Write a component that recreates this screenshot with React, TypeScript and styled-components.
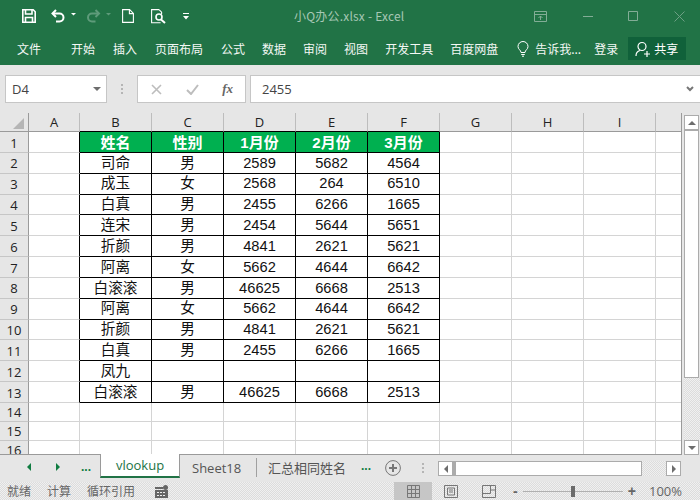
import styled, { createGlobalStyle } from "styled-components";

const Global = createGlobalStyle`
  html, body { margin: 0; padding: 0; background: #e6e6e6; }
  body { font-family: "Noto Sans CJK SC", "Liberation Sans", sans-serif; }
`;

const dither = `repeating-conic-gradient(#dcdcdc 0 25%, #f0f0f0 0 50%) 0 0 / 2px 2px`;

const Window = styled.div`
  width: 700px;
  height: 500px;
  display: flex;
  flex-direction: column;
  overflow: hidden;
`;

const TitleBar = styled.div`
  height: 32px;
  background: #217346;
  position: relative;
  display: flex;
  align-items: center;
  padding-left: 22px;
  flex: none;
`;

const QuickIcon = styled.svg<{ $gap: number }>`
  display: block;
  margin-right: ${p => p.$gap}px;
  flex: none;
`;

const WindowTitle = styled.div`
  position: absolute;
  left: 294px;
  top: 8px;
  font-size: 12px;
  line-height: 16px;
  letter-spacing: 0.2px;
  color: #a6c7b4;
  font-family: "Noto Sans CJK SC", "Open Sans", sans-serif;
`;

const WindowButtons = styled.div`
  margin-left: auto;
  display: flex;
  align-items: center;
  gap: 35.6px;
  padding-right: 15px;
`;

const Ribbon = styled.div`
  height: 33px;
  background: #217346;
  display: flex;
  align-items: center;
  padding: 0 14px 0 17px;
  flex: none;
  color: #fff;
  font-size: 12px;
`;

const RibbonTab = styled.span<{ $gap: number }>`
  margin-right: ${p => p.$gap}px;
  white-space: nowrap;
  line-height: 16px;
  color: #f4f8f5;
`;

const ShareButton = styled.div`
  width: 58px;
  height: 23px;
  margin-left: 10px;
  background: #10613a;
  display: flex;
  align-items: center;
  gap: 3px;
  padding-left: 7px;
  box-sizing: border-box;
`;

const FormulaBar = styled.div`
  height: 48px;
  background: #e6e6e6;
  display: flex;
  align-items: center;
  padding: 0 0 0 5px;
  flex: none;
  box-sizing: border-box;
`;

const Box = styled.div<{ $w?: number }>`
  ${p => (p.$w ? `width: ${p.$w}px; flex: none;` : "flex: 1;")}
  height: 28px;
  box-sizing: border-box;
  background: #fff;
  border: 1px solid #c6c6c6;
  display: flex;
  align-items: center;
  font-family: "Open Sans", "Liberation Sans", sans-serif;
  font-size: 13px;
  color: #444;
`;

const NameBox = styled(Box)`
  padding: 0 5px 0 6px;
  justify-content: space-between;
  margin-right: 14px;
`;

const FnBox = styled(Box)`
  padding: 0 12px 0 13px;
  justify-content: space-between;
  margin-right: 4px;
`;

const InputBox = styled(Box)`
  padding: 0 6px 0 11px;
  justify-content: space-between;
  border-right: none;
`;

const VDots = styled.div<{ $mt?: number; $ml?: number }>`
  width: 2px;
  height: 10px;
  margin: ${p => p.$mt ?? 0}px 14px 0 ${p => p.$ml ?? 0}px;
  background: repeating-linear-gradient(#b5b5b5 0 2px, transparent 2px 4px);
  flex: none;
`;

const FxGlyph = styled.span`
  font-family: "Liberation Serif", serif;
  font-style: italic;
  font-weight: 700;
  font-size: 13px;
  color: #666;
`;

const SheetArea = styled.div`
  height: 342px;
  flex: none;
  display: flex;
  background: #e6e6e6;
`;

const Sheet = styled.div`
  width: 682px;
  flex: none;
  overflow: hidden;
  border-right: 1px solid #9a9a9a;
  border-bottom: 1px solid #9a9a9a;
  box-sizing: border-box;
  display: grid;
  grid-template-columns: 29px 51px repeat(8, 72px) 26px;
  grid-template-rows: 19px 21px repeat(12, 20.83px) repeat(3, 19px);
  background: #fff;
`;

const ColHead = styled.div<{ $black?: boolean; $corner?: boolean }>`
  background: #e6e6e6;
  border-right: 1px solid ${p => (p.$corner ? "#9a9a9a" : "#bdbdbd")};
  border-bottom: 1px solid ${p => (p.$black ? "#000" : "#9a9a9a")};
  box-sizing: border-box;
  font-family: "Open Sans", "Liberation Sans", sans-serif;
  font-size: 13px;
  color: #222;
  display: flex;
  align-items: center;
  justify-content: center;
  position: relative;
`;

const RowHead = styled.div`
  background: #e6e6e6;
  border-right: 1px solid #9a9a9a;
  border-bottom: 1px solid #c6c6c6;
  box-sizing: border-box;
  font-family: "Open Sans", "Liberation Sans", sans-serif;
  font-size: 13px;
  color: #222;
  display: flex;
  align-items: center;
  justify-content: center;
  padding-top: 1px;
`;

const CornerMark = styled.div`
  position: absolute;
  right: 4px;
  bottom: 2px;
  width: 0;
  height: 0;
  border-left: 11px solid transparent;
  border-bottom: 11px solid #b5b5b5;
`;

const Cell = styled.div<{ $head?: boolean; $right?: boolean; $bottom?: boolean }>`
  box-sizing: border-box;
  background: ${p => (p.$head ? "#00b050" : "#fff")};
  color: ${p => (p.$head ? "#fff" : "#111")};
  font-weight: ${p => (p.$head ? 700 : 400)};
  font-family: "Liberation Sans", "Noto Sans CJK SC", sans-serif;
  font-size: ${p => (p.$head ? 15 : 14.67)}px;
  line-height: 1;
  border-right: 1px solid ${p => (p.$right ? "#000" : "#d4d4d4")};
  border-bottom: 1px solid ${p => (p.$bottom ? "#000" : "#d4d4d4")};
  display: flex;
  align-items: center;
  justify-content: center;
  overflow: hidden;
  white-space: nowrap;
`;

const ScrollColumn = styled.div`
  flex: 1;
  display: flex;
  flex-direction: column;
  padding: 2px 0 0 2px;
  box-sizing: border-box;
`;

const ScrollButton = styled.div`
  width: 15px;
  height: 15px;
  flex: none;
  box-sizing: border-box;
  background: #fff;
  border: 1px solid #ababab;
  display: flex;
  align-items: center;
  justify-content: center;
`;

const ScrollThumb = styled.div`
  width: 15px;
  height: 248px;
  flex: none;
  box-sizing: border-box;
  background: #fff;
  border: 1px solid #ababab;
`;

const ScrollTrack = styled.div`
  flex: 1;
  background: ${dither};
`;

const Arrow = styled.div<{ $dir: "up" | "down" | "left" | "right"; $color?: string; $size?: number }>`
  width: 0;
  height: 0;
  flex: none;
  ${p => {
    const s = p.$size ?? 4;
    const c = p.$color ?? "#6d6d6d";
    if (p.$dir === "up") return `border: ${s}px solid transparent; border-top: 0; border-bottom-color: ${c};`;
    if (p.$dir === "down") return `border: ${s}px solid transparent; border-bottom: 0; border-top-color: ${c};`;
    if (p.$dir === "left") return `border: ${s}px solid transparent; border-left: 0; border-right-color: ${c};`;
    return `border: ${s}px solid transparent; border-right: 0; border-left-color: ${c};`;
  }}
`;

const TabBar = styled.div`
  height: 27px;
  flex: none;
  background: #e6e6e6;
  display: flex;
  align-items: flex-start;
  font-family: "Open Sans", "Noto Sans CJK SC", sans-serif;
  font-size: 13px;
  color: #555;
`;

const TabNav = styled.div`
  width: 100px;
  height: 24px;
  flex: none;
  display: flex;
  align-items: center;
  padding-left: 27px;
  box-sizing: border-box;
  gap: 25px;
`;

const GreenDots = styled.span<{ $mt?: number; $ml?: number }>`
  width: 10px;
  flex: none;
  color: #107c41;
  font-family: "Liberation Sans", sans-serif;
  font-weight: 700;
  font-size: 12px;
  line-height: 1;
  margin: ${p => p.$mt ?? 0}px 0 0 ${p => p.$ml ?? 0}px;
`;

const ActiveTab = styled.div`
  width: 80px;
  height: 24px;
  margin-top: -1px;
  box-sizing: border-box;
  background: #fff;
  border-left: 1px solid #9a9a9a;
  border-right: 1px solid #9a9a9a;
  border-bottom: 2px solid #217346;
  color: #217346;
  display: flex;
  align-items: center;
  justify-content: center;
  flex: none;
`;

const SheetTab = styled.div<{ $first?: boolean }>`
  display: flex;
  align-items: center;
  white-space: nowrap;
  flex: none;
  box-sizing: border-box;
  ${p =>
    p.$first
      ? "width: 77px; height: 19px; margin-top: 3px; padding-left: 12px; border-right: 1px solid #a0a0a0;"
      : "height: 24px; padding: 0 15px 0 11px;"}
`;

const AddSheet = styled.svg`
  display: block;
  margin: 5px 0 0 14px;
  flex: none;
`;

const HScroll = styled.div`
  margin-top: 6px;
  width: 243px;
  height: 15px;
  display: flex;
  flex: none;
`;

const HThumb = styled.div`
  width: 189px;
  flex: none;
  box-sizing: border-box;
  background: #fff;
  border: 1px solid #ababab;
  border-left-width: 3px;
`;

const StatusBar = styled.div`
  flex: 1;
  min-height: 0;
  background: ${dither};
  display: flex;
  align-items: center;
  font-size: 12px;
  color: #666;
  padding-left: 7px;
`;

const StatusText = styled.span`
  margin-right: 16px;
  line-height: 1;
`;

const MacroIcon = styled.svg`
  margin-left: 4px;
  flex: none;
`;

const ViewButton = styled.div<{ $on?: boolean; $ml?: number }>`
  width: 38px;
  height: 18px;
  margin-left: ${p => p.$ml ?? 0}px;
  display: flex;
  align-items: center;
  justify-content: center;
  flex: none;
  background: ${p => (p.$on ? "#c6c6c6" : "transparent")};
`;

const ZoomSlider = styled.div`
  width: 100px;
  height: 1px;
  margin: 0 5px;
  background: #b0b0b0;
  position: relative;
`;

const ZoomKnob = styled.div`
  position: absolute;
  left: 48px;
  top: -5px;
  width: 4px;
  height: 11px;
  background: #6a6a6a;
`;

const ZoomSign = styled.span<{ $ml?: number }>`
  font-family: "Liberation Sans", sans-serif;
  font-weight: 700;
  font-size: 14px;
  line-height: 1;
  color: #666;
  margin-left: ${p => p.$ml ?? 0}px;
`;

const ZoomValue = styled.span`
  font-family: "Open Sans", sans-serif;
  font-size: 13px;
  color: #666;
  margin-left: auto;
  padding-right: 18px;
`;

const columns = ["A", "B", "C", "D", "E", "F", "G", "H", "I"];

const rows: string[][] = [
  ["姓名", "性别", "1月份", "2月份", "3月份"],
  ["司命", "男", "2589", "5682", "4564"],
  ["成玉", "女", "2568", "264", "6510"],
  ["白真", "男", "2455", "6266", "1665"],
  ["连宋", "男", "2454", "5644", "5651"],
  ["折颜", "男", "4841", "2621", "5621"],
  ["阿离", "女", "5662", "4644", "6642"],
  ["白滚滚", "男", "46625", "6668", "2513"],
  ["阿离", "女", "5662", "4644", "6642"],
  ["折颜", "男", "4841", "2621", "5621"],
  ["白真", "男", "2455", "6266", "1665"],
  ["凤九", "", "", "", ""],
  ["白滚滚", "男", "46625", "6668", "2513"],
];

function SheetGrid() {
  const cells = [];
  cells.push(
    <ColHead key="corner" $corner>
      <CornerMark />
    </ColHead>
  );
  columns.forEach((c, i) => {
    cells.push(<ColHead key={c} $black={i >= 1 && i <= 5}>{c}</ColHead>);
  });
  cells.push(<ColHead key="J" />);

  for (let r = 0; r < 16; r++) {
    cells.push(<RowHead key={"r" + r}>{r + 1}</RowHead>);
    for (let c = 0; c < 10; c++) {
      const inTable = r < 13 && c >= 1 && c <= 5;
      const value = inTable ? rows[r][c - 1] : "";
      cells.push(
        <Cell
          key={r + "-" + c}
          $head={inTable && r === 0}
          $right={inTable || (c === 0 && r < 13)}
          $bottom={inTable}
        >
          {value}
        </Cell>
      );
    }
  }
  return <Sheet>{cells}</Sheet>;
}

export default function App() {
  return (
    <Window>
      <Global />
      <TitleBar>
        <QuickIcon $gap={15} width="14" height="14" viewBox="0 0 14 14" fill="none" stroke="#fff" strokeWidth="1.6">
          <path d="M.8.8h10.400l2 2v10.400H.8z" />
          <path d="M3.500 1v4h6.500V1M3.500 13V8.500h7V13" />
        </QuickIcon>
        <QuickIcon $gap={10} width="25" height="14" viewBox="0 0 25 14" fill="none" stroke="#fff" strokeWidth="2">
          <path d="M5 1 1.500 4.500 5 8" />
          <path d="M2 4.500h6.500a4 4 0 0 1 0 8H5" />
          <path d="M20 4h5l-2.500 2.500z" fill="#fff" stroke="none" />
        </QuickIcon>
        <QuickIcon $gap={11} width="25" height="14" viewBox="0 0 25 14" fill="none" stroke="#5e9b7a" strokeWidth="2">
          <path d="M9.500 1 13 4.500 9.500 8" />
          <path d="M12.500 4.500H6a4 4 0 0 0 0 8h3.500" />
          <path d="M20 4h5l-2.500 2.500z" fill="#5e9b7a" stroke="none" />
        </QuickIcon>
        <QuickIcon $gap={17} width="12" height="14" viewBox="0 0 12 14" fill="none" stroke="#fff" strokeWidth="1.1">
          <path d="M.6.6h7l3.800 3.800v9H.6z" />
          <path d="M7.400.6v4h4" />
        </QuickIcon>
        <QuickIcon $gap={17} width="15" height="15" viewBox="0 0 15 15" fill="none" stroke="#fff" strokeWidth="1.1">
          <path d="M8 .6H.6v13.200h9M8 .6l2.600 2.600V5" />
          <circle cx="8" cy="8" r="3" strokeWidth="1.6" />
          <path d="M10 10.500 14 14" strokeWidth="2" />
        </QuickIcon>
        <QuickIcon $gap={0} width="6" height="7" viewBox="0 0 6 7" fill="#fff">
          <path d="M0 0h6v1H0zM0 3h6L3 6.500z" />
        </QuickIcon>
        <WindowTitle>小Q办公.xlsx - Excel</WindowTitle>
        <WindowButtons>
          <svg width="13" height="11" viewBox="0 0 13 11" fill="none" stroke="#82ad96">
            <path d="M.5.5h12v10H.5zM.5 3.500h12M6.500 9V5M4.500 7l2-2 2 2" />
          </svg>
          <svg width="10" height="11" viewBox="0 0 10 11" fill="none" stroke="#82ad96">
            <path d="M0 5.500h10" />
          </svg>
          <svg width="10" height="10" viewBox="0 0 10 10" fill="none" stroke="#82ad96">
            <path d="M.5.5h9v9h-9z" />
          </svg>
          <svg width="11" height="11" viewBox="0 0 11 11" fill="none" stroke="#6d9f84">
            <path d="M.5.5l10 10M10.500.5l-10 10" />
          </svg>
        </WindowButtons>
      </TitleBar>
      <Ribbon>
        <RibbonTab $gap={30}>文件</RibbonTab>
        <RibbonTab $gap={18}>开始</RibbonTab>
        <RibbonTab $gap={18}>插入</RibbonTab>
        <RibbonTab $gap={18}>页面布局</RibbonTab>
        <RibbonTab $gap={17}>公式</RibbonTab>
        <RibbonTab $gap={17}>数据</RibbonTab>
        <RibbonTab $gap={17}>审阅</RibbonTab>
        <RibbonTab $gap={17}>视图</RibbonTab>
        <RibbonTab $gap={17}>开发工具</RibbonTab>
        <RibbonTab $gap={19}>百度网盘</RibbonTab>
        <QuickIcon $gap={6} width="12" height="16" viewBox="0 0 12 16" fill="none" stroke="#fff">
          <path d="M4 11.500C4 9 1 8.500 1 5.500a5 5 0 0 1 10 0c0 3-3 3.500-3 6zM4.200 13.500h3.600M5 15.200h2" />
        </QuickIcon>
        <RibbonTab $gap={13}>告诉我...</RibbonTab>
        <RibbonTab $gap={0}>登录</RibbonTab>
        <ShareButton>
          <svg width="16" height="16" viewBox="0 0 16 16" fill="none" stroke="#fff" strokeWidth="1.2">
            <circle cx="7" cy="5.500" r="4" />
            <path d="M1 15c0-3 2-5 4-5.500M12 10v6M9 13h6" />
          </svg>
          <span>共享</span>
        </ShareButton>
      </Ribbon>
      <FormulaBar>
        <NameBox $w={102}>
          D4
          <Arrow $dir="down" $size={4} />
        </NameBox>
        <VDots />
        <FnBox $w={109}>
          <svg width="11" height="11" viewBox="0 0 11 11" fill="none" stroke="#bdbdbd" strokeWidth="1.6">
            <path d="M1 1l9 9M10 1l-9 9" />
          </svg>
          <svg width="13" height="11" viewBox="0 0 13 11" fill="none" stroke="#bdbdbd" strokeWidth="2">
            <path d="M1 6l4 4 7-9" />
          </svg>
          <FxGlyph>fx</FxGlyph>
        </FnBox>
        <InputBox>
          2455
          <svg width="8" height="6" viewBox="0 0 8 6" fill="none" stroke="#777" strokeWidth="2">
            <path d="M1 1l3 3 3-3" />
          </svg>
        </InputBox>
      </FormulaBar>
      <SheetArea>
        <SheetGrid />
        <ScrollColumn>
          <ScrollButton><Arrow $dir="up" /></ScrollButton>
          <ScrollThumb />
          <ScrollTrack />
          <ScrollButton><Arrow $dir="down" /></ScrollButton>
        </ScrollColumn>
      </SheetArea>
      <TabBar>
        <TabNav>
          <Arrow $dir="left" $color="#107c41" />
          <Arrow $dir="right" $color="#107c41" />
          <GreenDots $ml={-4}>...</GreenDots>
        </TabNav>
        <ActiveTab>vlookup</ActiveTab>
        <SheetTab $first>Sheet18</SheetTab>
        <SheetTab>汇总相同姓名</SheetTab>
        <GreenDots $mt={5}>...</GreenDots>
        <AddSheet width="16" height="16" viewBox="0 0 16 16" fill="none" stroke="#777">
          <circle cx="8" cy="8" r="7.400" />
          <path d="M8 4v8M4 8h8" strokeWidth="2" />
        </AddSheet>
        <VDots $mt={8} $ml={21} />
        <HScroll>
          <ScrollButton><Arrow $dir="left" /></ScrollButton>
          <HThumb />
          <ScrollTrack />
          <ScrollButton><Arrow $dir="right" /></ScrollButton>
        </HScroll>
      </TabBar>
      <StatusBar>
        <StatusText>就绪</StatusText>
        <StatusText>计算</StatusText>
        <StatusText>循环引用</StatusText>
        <MacroIcon width="13" height="13" viewBox="0 0 13 13" fill="#666">
          <path d="M0 2h8v2H0zM0 5h13v8H0z" />
          <circle cx="10.500" cy="2.500" r="2.500" />
          <path d="M2 7h2v1H2zM5 7h2v1H5zM8 7h2v1H8zM2 10h2v1H2zM5 10h2v1H5zM8 10h2v1H8z" fill="#eee" />
        </MacroIcon>
        <ViewButton $on $ml={226}>
          <svg width="13" height="13" viewBox="0 0 13 13" fill="none" stroke="#777">
            <path d="M.5.5h12v12H.5zM4.500.5v12M8.500.5v12M.5 4.500h12M.5 8.500h12" />
          </svg>
        </ViewButton>
        <ViewButton>
          <svg width="14" height="13" viewBox="0 0 14 13" fill="none" stroke="#777">
            <path d="M.5.5h13v12H.5zM3.500 3h7v7h-7zM5 5h4M5 7h4" />
          </svg>
        </ViewButton>
        <ViewButton>
          <svg width="14" height="13" viewBox="0 0 14 13" fill="none" stroke="#777">
            <path d="M.5.5h13v12H.5zM.5 8.500h8v-8M8.500 5h5" />
          </svg>
        </ViewButton>
        <ZoomSign $ml={5}>-</ZoomSign>
        <ZoomSlider><ZoomKnob /></ZoomSlider>
        <ZoomSign>+</ZoomSign>
        <ZoomValue>100%</ZoomValue>
      </StatusBar>
    </Window>
  );
}
